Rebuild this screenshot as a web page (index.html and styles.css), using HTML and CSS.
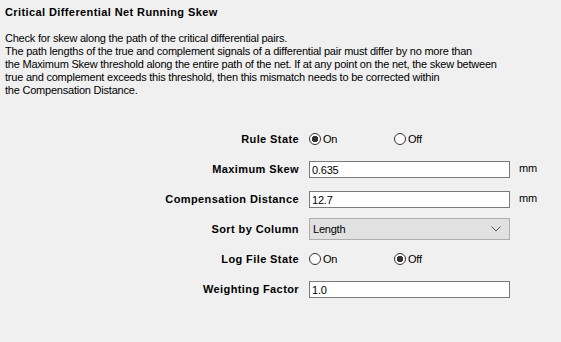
FILE: index.html
```html
<!DOCTYPE html>
<html lang="en">
  <head>
    <meta charset="UTF-8" />
    <title>Critical Differential Net Running Skew</title>
    <link rel="stylesheet" href="styles.css">
  </head>
  <body>
    <!-- header -->
    <div class="header">
      <h1 class="title">Critical Differential Net Running Skew</h1>
      <p class="desc">
        Check for skew along the path of the critical differential pairs.<br>
        The path lengths of the true and complement signals of a differential pair must differ by no more than<br>
        the Maximum Skew threshold along the entire path of the net. If at any point on the net, the skew between<br>
        true and complement exceeds this threshold, then this mismatch needs to be corrected within<br>
        the Compensation Distance.
      </p>
    </div>

    <!-- form -->
    <div class="form">
      <div class="label">Rule State</div>
      <div class="radios">
        <span class="radio checked">On</span>
        <span class="radio">Off</span>
      </div>
      <div class="unit"></div>

      <div class="label">Maximum Skew</div>
      <div class="field">0.635</div>
      <div class="unit">mm</div>

      <div class="label">Compensation Distance</div>
      <div class="field">12.7</div>
      <div class="unit">mm</div>

      <div class="label">Sort by Column</div>
      <div class="select">
        <span>Length</span>
        <svg width="10" height="6" viewBox="0 0 10 6"><path d="M0.5 0.5 L5 5 L9.5 0.5" fill="none" stroke="#555" stroke-width="1"/></svg>
      </div>
      <div class="unit"></div>

      <div class="label">Log File State</div>
      <div class="radios">
        <span class="radio">On</span>
        <span class="radio checked">Off</span>
      </div>
      <div class="unit"></div>

      <div class="label">Weighting Factor</div>
      <div class="field">1.0</div>
      <div class="unit"></div>
    </div>
  </body>
</html>
```

FILE: styles.css
```css
* {
  margin: 0;
  padding: 0;
  box-sizing: border-box;
}

body {
  font-family: "Liberation Sans", Arial, sans-serif;
  font-size: 11px;
  line-height: 13px;
  letter-spacing: -0.22px;
  color: #000;
  background: #f0f0f0;
  width: 561px;
  height: 342px;
  overflow: hidden;
}

/* header */
.header {
  padding: 6px 5px 0;
}

.title {
  font-size: 11px;
  font-weight: bold;
  line-height: 13px;
  letter-spacing: 0.4px;
}

.desc {
  margin-top: 13px;
}

/* form grid */
.form {
  display: grid;
  grid-template-columns: 299px 201px 40px;
  grid-auto-rows: 30px;
  column-gap: 10px;
  align-items: center;
  margin-top: 27px;
}

.label {
  font-weight: bold;
  text-align: right;
  letter-spacing: 0.4px;
}

.unit {
  margin-left: -1px;
  padding-bottom: 2px;
}

.field {
  height: 17px;
  border: 1px solid #7a7a7a;
  background: #fff;
  padding: 1px 3px 0 2px;
  line-height: 14px;
}

.select {
  height: 22px;
  border: 1px solid #adadad;
  background: #e1e1e1;
  display: flex;
  align-items: center;
  justify-content: space-between;
  padding: 0 8px 0 3px;
}

.radios {
  display: flex;
}

.radio {
  width: 85px;
  display: flex;
  align-items: center;
  gap: 2px;
}

.radio::before {
  content: "";
  width: 12px;
  height: 12px;
  border: 1px solid #333;
  border-radius: 50%;
  background: #fff;
  box-sizing: border-box;
}

.radio.checked::before {
  background: radial-gradient(circle, #333 0 3px, #fff 3.5px);
}
```
